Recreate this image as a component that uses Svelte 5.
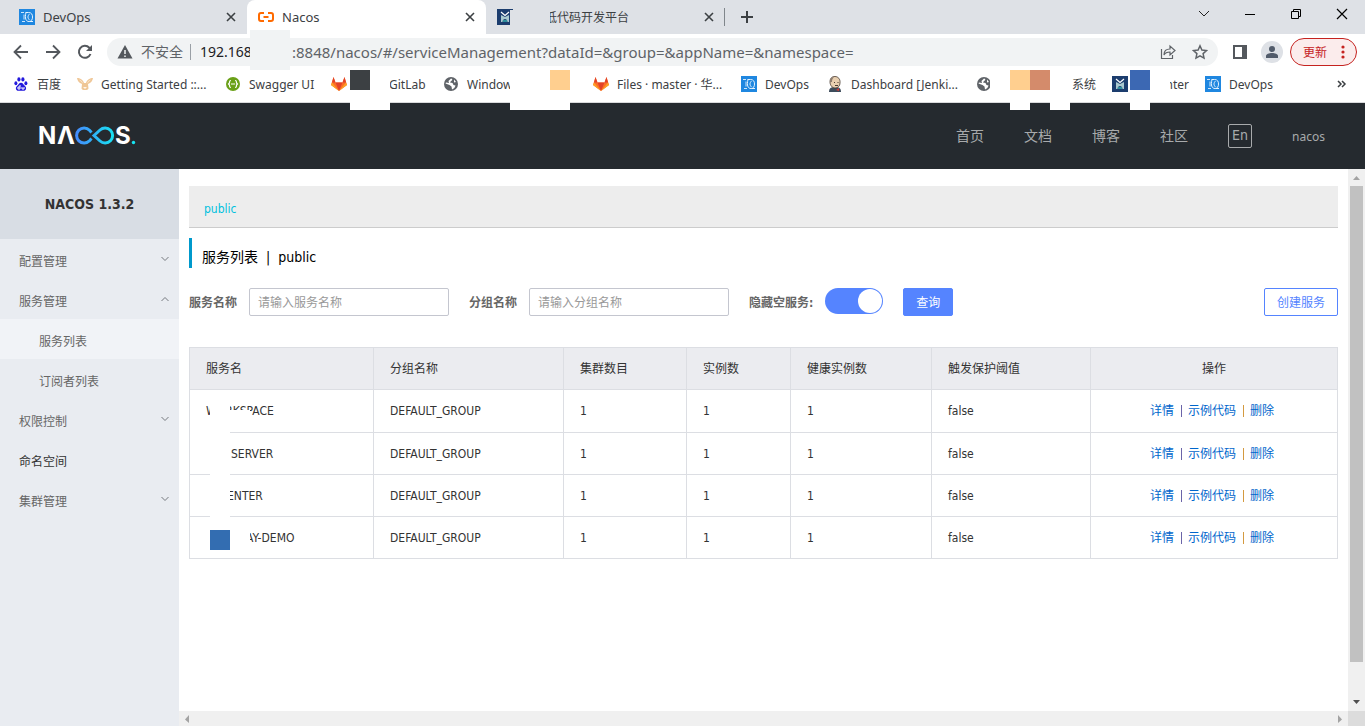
<script>
  const columns = [
    { title: '服务名', width: 184 },
    { title: '分组名称', width: 190 },
    { title: '集群数目', width: 123 },
    { title: '实例数', width: 104 },
    { title: '健康实例数', width: 141 },
    { title: '触发保护阈值', width: 159 },
    { title: '操作', width: 247 }
  ];
  const totalWidth = columns.reduce((sum, column) => sum + column.width, 0);

  const services = [
    { name: 'WORKSPACE', indent: '' },
    { name: 'SERVER', indent: 'short' },
    { name: 'ENTER', indent: 'shorter' },
    { name: 'AY-DEMO', indent: 'long' }
  ];

  const navLinks = ['首页', '文档', '博客', '社区'];

  const menu = [
    { label: '配置管理', arrow: 'down' },
    { label: '服务管理', arrow: 'up' },
    { label: '服务列表', child: true, active: true },
    { label: '订阅者列表', child: true },
    { label: '权限控制', arrow: 'down' },
    { label: '命名空间', dark: true },
    { label: '集群管理', arrow: 'down' }
  ];

  const bookmarks = [
    { icon: 'baidu', label: '百度' },
    { icon: 'rabbit', label: 'Getting Started ::...' },
    { icon: 'swagger', label: 'Swagger UI' },
    { icon: 'gitlab', label: 'GitLab', indent: true },
    { icon: 'globe', label: 'Window' },
    { icon: 'gitlab', label: 'Files · master · 华...' },
    { icon: 'devops', label: 'DevOps' },
    { icon: 'jenkins', label: 'Dashboard [Jenki...' },
    { icon: 'globe', label: '系统', end: true },
    { icon: 'tower', label: 'nter', end: true },
    { icon: 'devops', label: 'DevOps' }
  ];

  // blocks that cover private names: x, y, width, height, colour
  const covers = [
    [510, 10, 40, 20, '#dee1e6'],
    [250, 30, 40, 40, '#f1f3f4'],
    [370, 70, 20, 40, '#fff'],
    [350, 90, 20, 20, '#fff'],
    [350, 70, 20, 20, '#3c4043'],
    [510, 70, 60, 40, '#fff'],
    [550, 70, 20, 20, '#ffcf8f'],
    [990, 70, 20, 30, '#fff'],
    [1010, 70, 20, 20, '#ffcf8f'],
    [1030, 70, 20, 20, '#d48b6b'],
    [1010, 90, 20, 20, '#fff'],
    [1050, 70, 20, 40, '#fff'],
    [1130, 70, 20, 20, '#3c68b3'],
    [1130, 90, 20, 20, '#fff'],
    [1150, 70, 20, 30, '#fff'],
    [210, 390, 20, 140, '#fff'],
    [190, 430, 20, 20, '#fff'],
    [230, 410, 20, 20, '#fff'],
    [210, 530, 20, 20, '#336db1'],
    [230, 530, 20, 20, '#fff']
  ];

  let serviceName = '';
  let groupName = '';
  let hideEmpty = true;
</script>

{#snippet icon(name)}
  <svg class="icon" width="16" height="16" viewBox="0 0 16 16" aria-hidden="true">
    {#if name === 'devops'}
      <rect width="16" height="16" fill="#1f87e0" />
      <path d="M2 3.500h3M3 12.500h3M5 5.500v5" fill="none" stroke="#cfe6fb" />
      <path d="M6.500 3.500h3c3 0 4 2 4 4.500s-1 4.500-3.500 4.500c-3 0-4.500-3-3-9M10.500 5c-2 2-2 4 0 6M11 12.500h3" fill="none" stroke="#e5f3ff" />
    {:else if name === 'tower'}
      <rect width="16" height="16" fill="#1c3d6e" />
      <path d="M4 3l4 3.500L12 3" fill="none" stroke="#fff" stroke-width="1.200" />
      <path d="M4 13V6l4 2 4-2v7h-1.500c0-4-5-4-5 0z" fill="#a9c9cf" />
      <path d="M6 12h4" stroke="#2e8f9d" stroke-width="2" />
    {:else if name === 'nacos'}
      <path d="M6 4H3Q1 4 1 6v4q0 2 2 2h3M10 4h3q2 0 2 2v4q0 2-2 2h-3M5.500 8h5" fill="none" stroke="#ff6a00" stroke-width="2" />
    {:else if name === 'baidu'}
      <g fill="#2319dc">
        <ellipse cx="2.900" cy="7.200" rx="1.500" ry="2" />
        <ellipse cx="5.900" cy="3.400" rx="1.600" ry="2.100" />
        <ellipse cx="9.900" cy="3.400" rx="1.600" ry="2.100" />
        <ellipse cx="12.900" cy="7.200" rx="1.500" ry="2" />
        <path d="M8 6.800c-2 0-2.500 2-4 3.200-2 1.800-1.200 4.800 1.400 4.800h5.200c2.600 0 3.400-3 1.400-4.800C10.500 8.800 10 6.800 8 6.800z" />
      </g>
      <path d="M7 9v4H5v-2h2M9 11v2h2v-2" fill="none" stroke="#fff" />
    {:else if name === 'rabbit'}
      <path d="M0 2c3 0 6 1.500 7 5h2c1-3.500 4-5 7-5-.5 3-2 5-5 6l.5 4.500C11 14 10 14 8 14s-3 0-3.500-1.500L5 8C2 7 .5 5 0 2z" fill="#efc696" />
      <path d="M2 3.500c2 .5 3.500 2 4 4zM14 3.500c-2 .5-3.500 2-4 4z" fill="#fbe9d3" />
      <path d="M6 11l2 2 2-2z" fill="#fff5e8" />
    {:else if name === 'swagger'}
      <circle cx="8" cy="8" r="7" fill="#6aa018" />
      <path d="M6 4.500q-1.500 0-1.500 1.500v1L3.500 8l1 1v1q0 1.500 1.500 1.500M10 4.500q1.500 0 1.500 1.500v1l1 1-1 1v1q0 1.500-1.500 1.500M6 8h4" fill="none" stroke="#fff" stroke-width="1.200" />
    {:else if name === 'gitlab'}
      <path d="M8 15L0 9l2.500-8 2 5.500h7l2-5.500L16 9z" fill="#fc6d26" />
      <path d="M8 15L4.500 6.500h7zM2.500 1l2 5.500H1zM13.500 1l-2 5.500H15z" fill="#e24329" />
      <path d="M0 9l1-2.500L8 15zM16 9l-1-2.500L8 15z" fill="#fca326" />
    {:else if name === 'globe'}
      <circle cx="8" cy="8" r="7" fill="#5f6368" />
      <path d="M8 2.500c2 .5 1.500 2 0 2.500L7 6.500l2.500.5 1 2 2 .5c-.5 2-1.500 3-3.500 4l-.5-3-2-1.500-4-1.500.5-1 3 .5L5.500 5zM11 3.500l2 2.500-2 .5z" fill="#fff" />
    {:else if name === 'jenkins'}
      <path d="M2 16c0-4 2-5 6-5s6 1 6 5z" fill="#3d4c5b" />
      <path d="M3 6c0-4 2-5.500 5-5.500S13.500 3 13 7c0 3-2 5-5 5S3 9 3 6z" fill="#e8cfb0" stroke="#4a3c33" stroke-width=".8" />
      <path d="M3 6c0-3 1-4.500 4-5-1.500 1.500-2 3-2 5z" fill="#8c7b6d" />
      <path d="M7 13l2 1 3-2v3l-3-1z" fill="#d33833" />
      <path d="M7 6.500h1M10.500 6.500h1M8 9.500h3" stroke="#4a3c33" />
    {/if}
  </svg>
{/snippet}

{#snippet cross()}
  <svg width="16" height="16" viewBox="0 0 16 16" aria-hidden="true">
    <path d="M4 4l8 8M12 4l-8 8" stroke="#3c4043" stroke-width="1.600" />
  </svg>
{/snippet}

<div class="window">
  <div class="tab-strip">
    <div class="tab">
      {@render icon('devops')}
      <span class="tab-title">DevOps</span>
      <button aria-label="Close">{@render cross()}</button>
    </div>
    <div class="tab current">
      {@render icon('nacos')}
      <span class="tab-title">Nacos</span>
      <button aria-label="Close">{@render cross()}</button>
    </div>
    <div class="tab last">
      {@render icon('tower')}
      <span class="tab-title masked">低代码开发平台</span>
      <button aria-label="Close">{@render cross()}</button>
    </div>
    <button class="new-tab" aria-label="New tab">
      <svg width="16" height="16" viewBox="0 0 16 16"><path d="M8 2v12M2 8h12" stroke="#3c4043" stroke-width="2" /></svg>
    </button>
    <div class="window-buttons">
      <button aria-label="Search tabs">
        <svg width="14" height="14" viewBox="0 0 14 14"><path d="M2 4l5 5 5-5" fill="none" stroke="#222" /></svg>
      </button>
      <button aria-label="Minimize">
        <svg width="14" height="14" viewBox="0 0 14 14"><path d="M2 7.500h10" stroke="#000" /></svg>
      </button>
      <button aria-label="Restore">
        <svg width="14" height="14" viewBox="0 0 14 14"><path d="M2.500 4.500h7v7h-7zM4.500 4.500v-2h7v7h-2" fill="none" stroke="#000" /></svg>
      </button>
      <button aria-label="Close window">
        <svg width="14" height="14" viewBox="0 0 14 14"><path d="M2 2l10 10M12 2L2 12" stroke="#000" stroke-width="1.200" /></svg>
      </button>
    </div>
  </div>

  <div class="toolbar">
    <button aria-label="Back">
      <svg width="16" height="16" viewBox="0 0 16 16"><path d="M15 8H2M8 1.500L1.500 8 8 14.500" fill="none" stroke="#54585d" stroke-width="1.800" /></svg>
    </button>
    <button aria-label="Forward">
      <svg width="16" height="16" viewBox="0 0 16 16"><path d="M1 8h13M8 1.500L14.500 8 8 14.500" fill="none" stroke="#54585d" stroke-width="1.800" /></svg>
    </button>
    <button aria-label="Reload">
      <svg width="16" height="16" viewBox="0 0 16 16"><path d="M13.500 10a6 6 0 1 1-1.200-6.300L14 5.500" fill="none" stroke="#54585d" stroke-width="2" /><path d="M15 1v6H9z" fill="#54585d" /></svg>
    </button>
    <div class="omnibox">
      <svg width="16" height="16" viewBox="0 0 16 16"><path d="M8 1l7.500 13.500H.5z" fill="#54585d" /><path d="M8 6v4M8 11.500v1.500" stroke="#f1f3f4" stroke-width="1.500" /></svg>
      <span class="insecure">不安全</span>
      <span class="host">192.168</span>
      <span class="path">:8848/nacos/#/serviceManagement?dataId=&amp;group=&amp;appName=&amp;namespace=</span>
      <button aria-label="Share">
        <svg width="16" height="16" viewBox="0 0 16 16"><path d="M1.500 5v9.500h11V11M4 11c0-4 2-6 6-6V2l5 4.500-5 4.500V8c-3 0-5 1-6 3z" fill="none" stroke="#5f6368" stroke-width="1.200" /></svg>
      </button>
      <button aria-label="Bookmark">
        <svg width="16" height="16" viewBox="0 0 16 16"><path d="M8 1.800l1.900 4.200 4.600.5-3.400 3.100.9 4.500-4-2.300-4 2.300.9-4.500L1.500 6.500l4.600-.5z" fill="none" stroke="#5f6368" stroke-width="1.500" /></svg>
      </button>
    </div>
    <button aria-label="Side panel">
      <svg width="14" height="14" viewBox="0 0 14 14"><path d="M1 1h12v12H1z" fill="none" stroke="#54585d" stroke-width="2" /><path d="M9 1h4v12H9z" fill="#54585d" /></svg>
    </button>
    <button class="avatar" aria-label="Profile">
      <svg width="22" height="22" viewBox="0 0 22 22"><circle cx="11" cy="11" r="11" fill="#dee1e6" /><circle cx="11" cy="8" r="3" fill="#525c6b" /><path d="M5 17v-2c0-2 3-3 6-3s6 1 6 3v2z" fill="#525c6b" /></svg>
    </button>
    <button class="update">
      更新
      <svg width="4" height="16" viewBox="0 0 4 16"><g fill="#c5221f"><circle cx="2" cy="3" r="1.600" /><circle cx="2" cy="8" r="1.600" /><circle cx="2" cy="13" r="1.600" /></g></svg>
    </button>
  </div>

  <nav class="bookmarks">
    {#each bookmarks as mark}
      <a href="#bookmark" class:indent={mark.indent} class:end={mark.end}>
        {@render icon(mark.icon)}
        <span>{mark.label}</span>
      </a>
    {/each}
    <button class="more" aria-label="More bookmarks">
      <svg width="10" height="8" viewBox="0 0 10 8"><path d="M1 1l3 3-3 3M5 1l3 3-3 3" fill="none" stroke="#3c4043" stroke-width="1.500" /></svg>
    </button>
  </nav>

  <header>
    <a href="#home" class="logo" aria-label="Nacos">
      <svg width="110" height="44" viewBox="-5 -10 110 44">
        <defs>
          <linearGradient id="loop" gradientUnits="userSpaceOnUse" x1="36" x2="76" y1="0" y2="0">
            <stop offset="0" stop-color="#4689fd" />
            <stop offset="1" stop-color="#16e4f2" />
          </linearGradient>
        </defs>
        <text x="-1" y="20" class="logo-text">N</text>
        <text x="18" y="20" class="logo-text">Λ</text>
        <path d="M52.500 8.500L50.500 6.300A7.500 7.500 0 1 0 50.500 16.700L52.500 14.500M55 11.500L61 6A7.500 7.500 0 1 1 61 17z" fill="none" stroke="url(#loop)" stroke-width="3" />
        <text x="76" y="20" class="logo-text">S</text>
        <circle cx="94.500" cy="18.500" r="1.700" fill="#16e4f2" />
      </svg>
    </a>
    <nav>
      {#each navLinks as link}
        <a href="#nav">{link}</a>
      {/each}
      <button class="lang">En</button>
      <a href="#user" class="user">nacos</a>
    </nav>
  </header>

  <div class="body">
    <aside>
      <h1>NACOS 1.3.2</h1>
      <ul>
        {#each menu as item}
          <li>
            <a href="#menu" class:child={item.child} class:active={item.active} class:dark={item.dark}>
              {item.label}
              {#if item.arrow}
                <svg class={item.arrow} width="8" height="6" viewBox="0 0 8 6"><path d="M.5 1L4 4.500 7.500 1" fill="none" stroke="#75797f" /></svg>
              {/if}
            </a>
          </li>
        {/each}
      </ul>
    </aside>

    <main>
      <div class="namespace"><a href="#public">public</a></div>
      <h2>服务列表&nbsp; |&nbsp; public</h2>

      <form on:submit|preventDefault>
        <label for="service">服务名称</label>
        <input id="service" type="text" placeholder="请输入服务名称" bind:value={serviceName} />
        <label for="group">分组名称</label>
        <input id="group" type="text" placeholder="请输入分组名称" bind:value={groupName} />
        <label for="hide">隐藏空服务:</label>
        <input id="hide" class="switch" type="checkbox" bind:checked={hideEmpty} />
        <button class="primary" type="submit">查询</button>
        <button class="create" type="button">创建服务</button>
      </form>

      <table>
        <colgroup>
          {#each columns as column}
            <col style="width: {(column.width / totalWidth) * 100}%" />
          {/each}
        </colgroup>
        <thead>
          <tr>
            {#each columns as column}
              <th>{column.title}</th>
            {/each}
          </tr>
        </thead>
        <tbody>
          {#each services as service}
            <tr>
              <td><span class={service.indent}>{service.name}</span></td>
              <td>DEFAULT_GROUP</td>
              <td>1</td>
              <td>1</td>
              <td>1</td>
              <td>false</td>
              <td>
                <div class="actions">
                  <a href="#detail">详情</a><i></i><a href="#code">示例代码</a><i class="warm"></i><a href="#delete">删除</a>
                </div>
              </td>
            </tr>
          {/each}
        </tbody>
      </table>
    </main>

    <div class="scroll-y">
      <svg width="17" height="17" viewBox="0 0 17 17"><path d="M5 11l3.500-4 3.500 4z" fill="#a3a3a3" /></svg>
      <div class="thumb"></div>
      <svg width="17" height="17" viewBox="0 0 17 17"><path d="M5 6h7l-3.500 4z" fill="#505050" /></svg>
    </div>
    <div class="scroll-x">
      <svg width="15" height="15" viewBox="0 0 15 15"><path d="M10 4v8L6 8.500z" fill="#a3a3a3" /></svg>
      <svg width="15" height="15" viewBox="0 0 15 15"><path d="M5 4v8l4-3.500z" fill="#a3a3a3" /></svg>
    </div>
    <div class="corner"></div>
  </div>

  {#each covers as [x, y, w, h, color]}
    <div class="cover" style="left: {x}px; top: {y}px; width: {w}px; height: {h}px; background: {color}"></div>
  {/each}
</div>

<style>
  :global(body) {
    background: #fff;
  }

  .window {
    position: relative;
    min-height: 100vh;
    display: flex;
    flex-direction: column;
    overflow: hidden;
    font-family: "DejaVu Sans Condensed", "Noto Sans", "Noto Sans CJK SC", sans-serif;
    font-size: 12px;
    color: #333;
  }

  svg {
    display: block;
    flex: none;
  }

  a {
    color: inherit;
    text-decoration: none;
  }

  button {
    padding: 0;
    border: none;
    background: none;
    font: inherit;
    color: inherit;
    flex: none;
  }

  .cover {
    position: absolute;
  }

  /* browser tabs */
  .tab-strip,
  .toolbar,
  .bookmarks {
    font-family: "Noto Sans", "Noto Sans CJK SC", sans-serif;
    color: #3c4043;
  }

  .tab-strip {
    display: flex;
    height: 34px;
    padding-left: 8px;
    background: #dee1e6;
  }

  .tab {
    display: flex;
    align-items: center;
    gap: 8px;
    width: 239px;
    box-sizing: border-box;
    padding: 0 8px 0 11px;
    font-size: 13px;
  }

  .tab.current {
    background: #fff;
    border-radius: 8px 8px 0 0;
  }

  .tab.last {
    position: relative;
  }

  .tab.last::after {
    content: "";
    position: absolute;
    right: 0;
    top: 8px;
    height: 18px;
    border-right: 1px solid #80868b;
  }

  .tab-title {
    flex: 1;
  }

  .tab-title.masked {
    padding-left: 24px;
    font-size: 12px;
  }

  .new-tab {
    padding: 0 14px;
  }

  .window-buttons {
    display: flex;
    gap: 32px;
    margin-left: auto;
    padding: 0 16px 6px 0;
  }

  /* address bar */
  .toolbar {
    display: flex;
    align-items: center;
    gap: 16px;
    height: 35px;
    padding: 0 8px 0 13px;
  }

  .omnibox {
    display: flex;
    align-items: center;
    flex: 1;
    height: 28px;
    margin: 0 -1px 0 -2px;
    padding: 0 10px;
    border-radius: 14px;
    background: #f1f3f4;
    font-size: 14px;
    color: #5f6368;
    white-space: nowrap;
  }

  .insecure {
    margin-left: 8px;
    padding-right: 7px;
    border-right: 1px solid #9aa0a6;
    line-height: 16px;
  }

  .host {
    width: 101px;
    box-sizing: border-box;
    padding-left: 9px;
    color: #202124;
  }

  .path {
    flex: 1;
    font-size: 15px;
  }

  .omnibox button + button {
    margin-left: 16px;
  }

  .avatar {
    margin-left: -2px;
  }

  .update {
    display: flex;
    align-items: center;
    justify-content: space-between;
    width: 67px;
    height: 28px;
    margin-left: -9px;
    padding: 0 11px 0 12px;
    border: 1px solid #c5221f;
    border-radius: 14px;
    background: #fbecec;
    color: #c5221f;
  }

  /* bookmarks */
  .bookmarks {
    display: grid;
    grid-template-columns: 64px 148px 106px 112px 150px 148px 86px 149px 136px 93px 86px 1fr;
    align-items: center;
    height: 34px;
    box-sizing: border-box;
    padding: 0 18px 3px 13px;
    border-bottom: 1px solid #d9dadc;
    white-space: nowrap;
  }

  .bookmarks a {
    display: flex;
    align-items: center;
    gap: 8px;
  }

  .bookmarks a.indent span {
    padding-left: 34px;
  }

  .bookmarks a.end {
    justify-content: space-between;
    padding-right: 16px;
  }

  .more {
    justify-self: end;
  }

  /* console header */
  header {
    display: flex;
    align-items: center;
    justify-content: space-between;
    height: 66px;
    padding: 0 40px 0 34px;
    background: #252a2f;
    color: #a8aaac;
  }

  .logo-text {
    font-family: Inter, "Liberation Sans", sans-serif;
    font-size: 24px;
    font-weight: 700;
    fill: #fff;
  }

  header nav {
    display: flex;
    align-items: center;
    gap: 40px;
    font-size: 14px;
  }

  header nav a {
    padding-bottom: 2px;
  }

  .lang {
    width: 24px;
    height: 24px;
    padding-bottom: 2px;
    border: 1px solid #a8aaac;
    border-radius: 2px;
    line-height: 20px;
  }

  header nav .user {
    padding: 0;
    font-family: "Noto Sans", sans-serif;
    font-size: 12px;
  }

  /* console body */
  .body {
    flex: 1;
    display: grid;
    grid-template-columns: 179px minmax(0, 1fr) 17px;
    grid-template-rows: 1fr 15px;
  }

  aside {
    grid-row: 1 / 3;
    background: #e9ecf1;
  }

  h1 {
    margin: 0;
    background: #d8dde4;
    font-size: 14px;
    line-height: 70px;
    text-align: center;
  }

  ul {
    margin: 0;
    padding: 0;
    list-style: none;
  }

  li a {
    display: flex;
    align-items: center;
    justify-content: space-between;
    height: 40px;
    box-sizing: border-box;
    padding: 2px 10px 0 19px;
    color: #666;
  }

  li a.child {
    padding-left: 39px;
  }

  li a.active {
    background: #f1f3f7;
  }

  li a.dark {
    color: #333;
  }

  li svg {
    margin-bottom: 2px;
  }

  .up {
    transform: rotate(180deg);
  }

  main {
    padding: 17px 10px;
    background: #fff;
  }

  .namespace {
    padding: 6px 15px 0;
    border-bottom: 1px solid #ccc;
    background: #ededed;
    line-height: 35px;
    color: #00c1de;
  }

  h2 {
    height: 22px;
    margin: 10px 0 20px;
    padding: 8px 0 0 10px;
    border-left: 3px solid #09c;
    font-size: 14px;
    font-weight: 400;
    line-height: 22px;
    color: #000;
  }

  form {
    display: flex;
    align-items: center;
    height: 28px;
    margin-bottom: 31px;
  }

  label {
    margin-right: 12px;
    padding-bottom: 2px;
    font-weight: 600;
    color: #666;
  }

  input {
    margin: 0;
  }

  input[type="text"] {
    width: 200px;
    height: 28px;
    box-sizing: border-box;
    margin-right: 20px;
    padding: 2px 8px 0;
    border: 1px solid #c4c6cf;
    border-radius: 2px;
    font: inherit;
    color: #333;
  }

  input::placeholder {
    color: #999;
    opacity: 1;
  }

  .switch {
    appearance: none;
    display: flex;
    align-items: center;
    align-self: flex-start;
    width: 58px;
    height: 26px;
    margin-right: 20px;
    padding: 0 1px;
    box-sizing: border-box;
    border-radius: 13px;
    background: #c4c6cf;
  }

  .switch::before {
    content: "";
    width: 24px;
    height: 24px;
    border-radius: 12px;
    background: #fff;
  }

  .switch:checked {
    justify-content: flex-end;
    background: #5584ff;
  }

  .primary,
  .create {
    height: 28px;
    padding: 0 12px 2px;
    border: 1px solid #5584ff;
    border-radius: 2px;
    background: #5584ff;
    color: #fff;
  }

  .create {
    margin-left: auto;
    background: #fff;
    color: #5584ff;
  }

  table {
    width: 100%;
    table-layout: fixed;
    border-collapse: collapse;
  }

  th,
  td {
    height: 42px;
    box-sizing: border-box;
    padding: 0 16px;
    border: 1px solid #dcdee3;
    font-weight: 400;
    text-align: left;
  }

  th {
    padding-bottom: 2px;
    background: #ebecf0;
  }

  th:last-child {
    text-align: center;
  }

  tbody tr:first-child td {
    height: 43px;
  }

  td:last-child {
    padding-right: 20px;
  }

  .short {
    padding-left: 25px;
  }

  .shorter {
    padding-left: 21px;
  }

  .long {
    padding-left: 40px;
  }

  .actions {
    display: flex;
    align-items: center;
    justify-content: center;
    gap: 6px;
    line-height: 16px;
    color: #06c;
  }

  .actions i {
    width: 1px;
    height: 12px;
    margin-left: 1px;
    background: #6b64a8;
  }

  .actions i.warm {
    background: #d49a40;
  }

  .scroll-y {
    display: flex;
    flex-direction: column;
    background: #f0f0f0;
  }

  .thumb {
    flex: 1;
    margin: 0 2px 32px;
    background: #c1c1c1;
  }

  .scroll-x {
    display: flex;
    justify-content: space-between;
    background: #f0f0f0;
  }

  .corner {
    background: #dcdcdc;
  }
</style>
